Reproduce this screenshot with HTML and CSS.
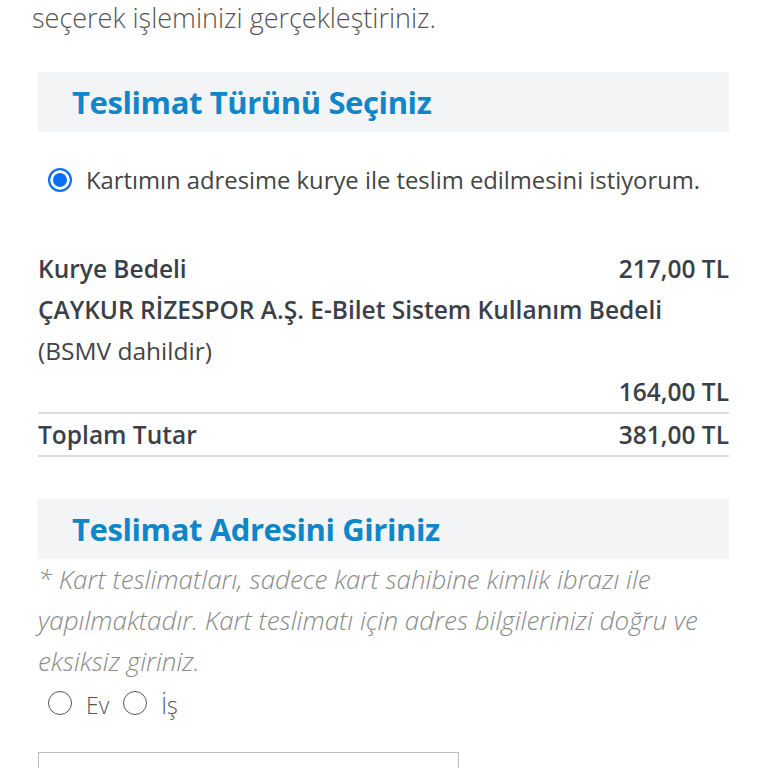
FILE: index.html
```html
<!DOCTYPE html>
<html lang="tr">
<head>
    <meta charset="UTF-8">
    <meta name="viewport" content="width=device-width, initial-scale=1.0">
    <title>Teslimat</title>
    <link rel="stylesheet" href="styles.css">
</head>
<body>
    <p class="intro">seçerek işleminizi gerçekleştiriniz.</p>

    <div class="section">
        <div class="section-header">
            <h2>Teslimat Türünü Seçiniz</h2>
        </div>

        <label class="delivery-option">
            <span class="radio checked"></span>
            <span>Kartımın adresime kurye ile teslim edilmesini istiyorum.</span>
        </label>

        <div class="fees">
            <div class="fee-row">
                <span class="fee-name">Kurye Bedeli</span>
                <span class="fee-amount">217,00 TL</span>
            </div>
            <div class="fee-row">
                <span class="fee-name">ÇAYKUR RİZESPOR A.Ş. E-Bilet Sistem Kullanım Bedeli</span>
            </div>
            <div class="fee-note">(BSMV dahildir)</div>
            <div class="fee-row right bordered">
                <span class="fee-amount">164,00 TL</span>
            </div>
            <div class="fee-row bordered">
                <span class="fee-name">Toplam Tutar</span>
                <span class="fee-amount">381,00 TL</span>
            </div>
        </div>
    </div>

    <div class="section">
        <div class="section-header">
            <h2>Teslimat Adresini Giriniz</h2>
        </div>

        <p class="notice">* Kart teslimatları, sadece kart sahibine kimlik ibrazı ile yapılmaktadır. Kart teslimatı için adres bilgilerinizi doğru ve eksiksiz giriniz.</p>

        <div class="address-type">
            <label class="type-option"><span class="radio"></span>Ev</label>
            <label class="type-option"><span class="radio"></span>İş</label>
        </div>

        <input type="text" class="address-input">
    </div>
</body>
</html>
```

FILE: styles.css
```css
:root {
    --blue-title: #0f86c8;
    --header-bg: #f3f4f6;
    --text-dark: #3b4048;
    --text-gray: #555;
    --text-muted: #8a8a8a;
    --line: #dcdcdc;
    --radio-blue: #0b6ff4;
}

* {
    margin: 0;
    padding: 0;
    box-sizing: border-box;
    font-family: 'Open Sans', 'Noto Sans', sans-serif;
}

body {
    background-color: #fff;
    color: var(--text-dark);
    padding: 0 39px 0 38px;
    overflow: hidden;
}

.intro {
    font-size: 27px;
    font-weight: 300;
    color: var(--text-gray);
    line-height: 36px;
    margin-left: -6px;
}

.section {
    margin-top: 36px;
}

.section-header {
    background-color: var(--header-bg);
    height: 60px;
    display: flex;
    align-items: center;
    padding-left: 34px;
}

.section-header h2 {
    font-size: 31px;
    font-weight: 700;
    color: var(--blue-title);
    letter-spacing: -0.4px;
}

.delivery-option {
    display: flex;
    align-items: center;
    gap: 14px;
    margin-top: 32px;
    padding-left: 10px;
    font-size: 23.8px;
    color: #444;
}

.radio {
    width: 24px;
    height: 24px;
    border-radius: 50%;
    border: 2px solid #666;
    flex-shrink: 0;
    display: inline-block;
}

.radio.checked {
    border: 2px solid var(--radio-blue);
    background-color: var(--radio-blue);
    box-shadow: inset 0 0 0 3px #fff;
}

.fees {
    margin-top: 52px;
}

.fee-row {
    display: flex;
    justify-content: space-between;
    font-size: 24.5px;
    font-weight: 600;
    line-height: 41px;
    color: var(--text-dark);
}

.fee-row.right {
    justify-content: flex-end;
}

.fee-row.bordered {
    border-bottom: 2px solid var(--line);
}

.fee-note {
    font-size: 24.5px;
    line-height: 41px;
    color: #444;
}

.section + .section {
    margin-top: 42px;
}

.notice {
    font-size: 26px;
    font-style: italic;
    font-weight: 300;
    color: var(--text-muted);
    line-height: 41px;
}

.address-type {
    display: flex;
    gap: 14px;
    padding-left: 10px;
    margin-top: 8px;
}

.type-option {
    display: flex;
    align-items: center;
    gap: 14px;
    font-size: 23px;
    font-weight: 300;
    color: #555;
    line-height: 30px;
}

.type-option .radio {
    border: 1.5px solid #555;
    margin-top: -4px;
}

.address-input {
    display: block;
    margin-top: 32px;
    width: 421px;
    height: 44px;
    border: 1px solid #bbb;
}
```
